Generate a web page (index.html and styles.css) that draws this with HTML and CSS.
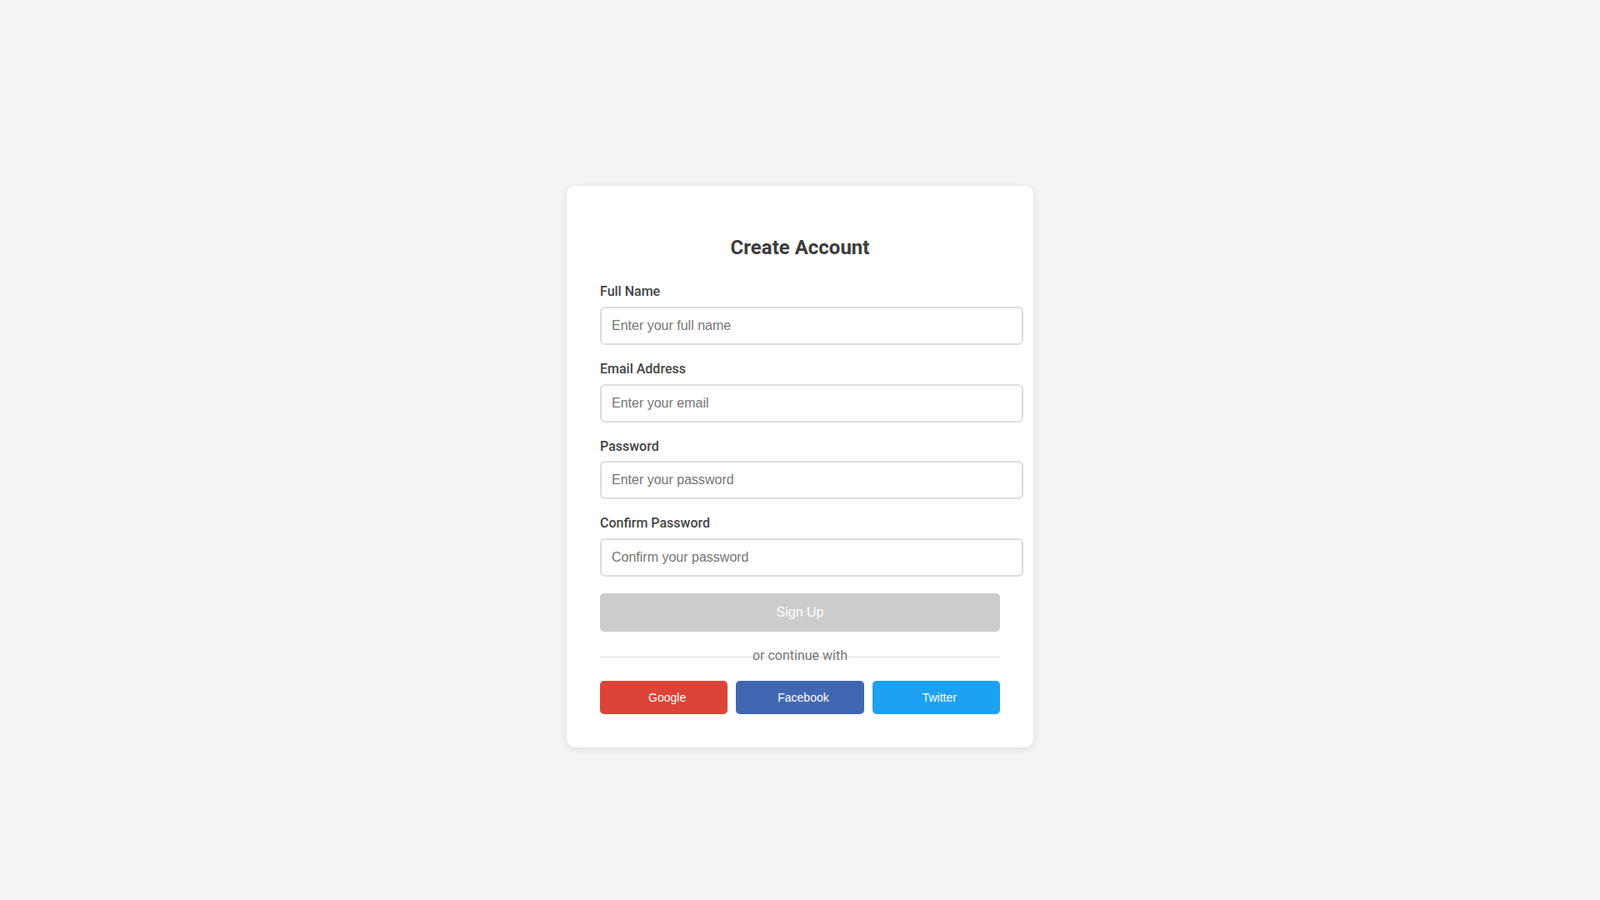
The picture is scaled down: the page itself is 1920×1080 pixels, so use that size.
FILE: index.html
```html
<!DOCTYPE html>
<html lang="en">
<head>
<meta charset="UTF-8">
<title>Create Account</title>
<link rel="stylesheet" href="styles.css">
</head>
<body>
  <div class="card">
    <h2 class="title">Create Account</h2>
    <form class="form">
      <div class="form-group">
        <label class="label" for="name">Full Name</label>
        <input class="input" id="name" type="text" placeholder="Enter your full name">
      </div>
      <div class="form-group">
        <label class="label" for="email">Email Address</label>
        <input class="input" id="email" type="email" placeholder="Enter your email">
      </div>
      <div class="form-group">
        <label class="label" for="pw">Password</label>
        <input class="input" id="pw" type="password" placeholder="Enter your password">
      </div>
      <div class="form-group">
        <label class="label" for="pw2">Confirm Password</label>
        <input class="input" id="pw2" type="password" placeholder="Confirm your password">
      </div>
      <button class="btn-submit" type="button">Sign Up</button>
    </form>
    <div class="divider"><span class="divider-text">or continue with</span></div>
    <div class="social">
      <button class="social-btn google" type="button"><span class="social-icon"></span>Google</button>
      <button class="social-btn facebook" type="button"><span class="social-icon"></span>Facebook</button>
      <button class="social-btn twitter" type="button"><span class="social-icon"></span>Twitter</button>
    </div>
  </div>
</body>
</html>
```
FILE: styles.css
```css
body {
  margin: 0;
  padding: 20px;
  min-height: 100vh;
  background: #f4f4f4;
  font-family: Roboto, "Liberation Sans", Arial, sans-serif;
  display: flex;
  align-items: center;
  justify-content: center;
}

.card {
  width: 480px;
  padding: 40px;
  background: #fff;
  border-radius: 10px;
  box-shadow: 0 2px 10px rgba(0, 0, 0, 0.1);
}

.title {
  margin: 20px 0 30px;
  font-size: 24px;
  line-height: 28px;
  font-weight: 700;
  color: #3c3c3c;
  text-align: center;
}

.form {
  margin: 0;
}

.form-group {
  margin-bottom: 20px;
}

.label {
  display: block;
  margin-bottom: 8px;
  font-size: 16px;
  line-height: 18.75px;
  font-weight: 500;
  color: #444;
}

.input {
  width: 100%;
  padding: 12px;
  border: 2px solid #ddd;
  border-radius: 6px;
  font-family: "Liberation Sans", Arial, sans-serif;
  font-size: 16px;
  line-height: 18px;
  color: #333;
  background: #fff;
  outline: none;
}

.input::placeholder {
  color: #757575;
}

.btn-submit {
  display: block;
  width: 100%;
  padding: 14px 0;
  border: none;
  border-radius: 5px;
  background: #ccc;
  color: #fff;
  font-family: "Liberation Sans", Arial, sans-serif;
  font-size: 16px;
  line-height: 18px;
}

.divider {
  position: relative;
  margin: 20px 0;
  text-align: center;
  font-size: 16px;
  line-height: 18.75px;
  color: #777;
}

.divider::before {
  content: "";
  position: absolute;
  left: 0;
  right: 0;
  top: 50%;
  border-top: 1px solid #ddd;
}

.divider-text {
  position: relative;
}

.social {
  display: flex;
  gap: 10px;
}

.social-btn {
  flex: 1;
  padding: 12px 0;
  border: none;
  border-radius: 5px;
  color: #fff;
  font-family: "Liberation Sans", Arial, sans-serif;
  font-size: 14px;
  line-height: 16px;
}

.social-icon {
  display: inline-block;
  margin-right: 8px;
}

.google { background: #db4437; }
.facebook { background: #4267b2; }
.twitter { background: #1da1f2; }
```
